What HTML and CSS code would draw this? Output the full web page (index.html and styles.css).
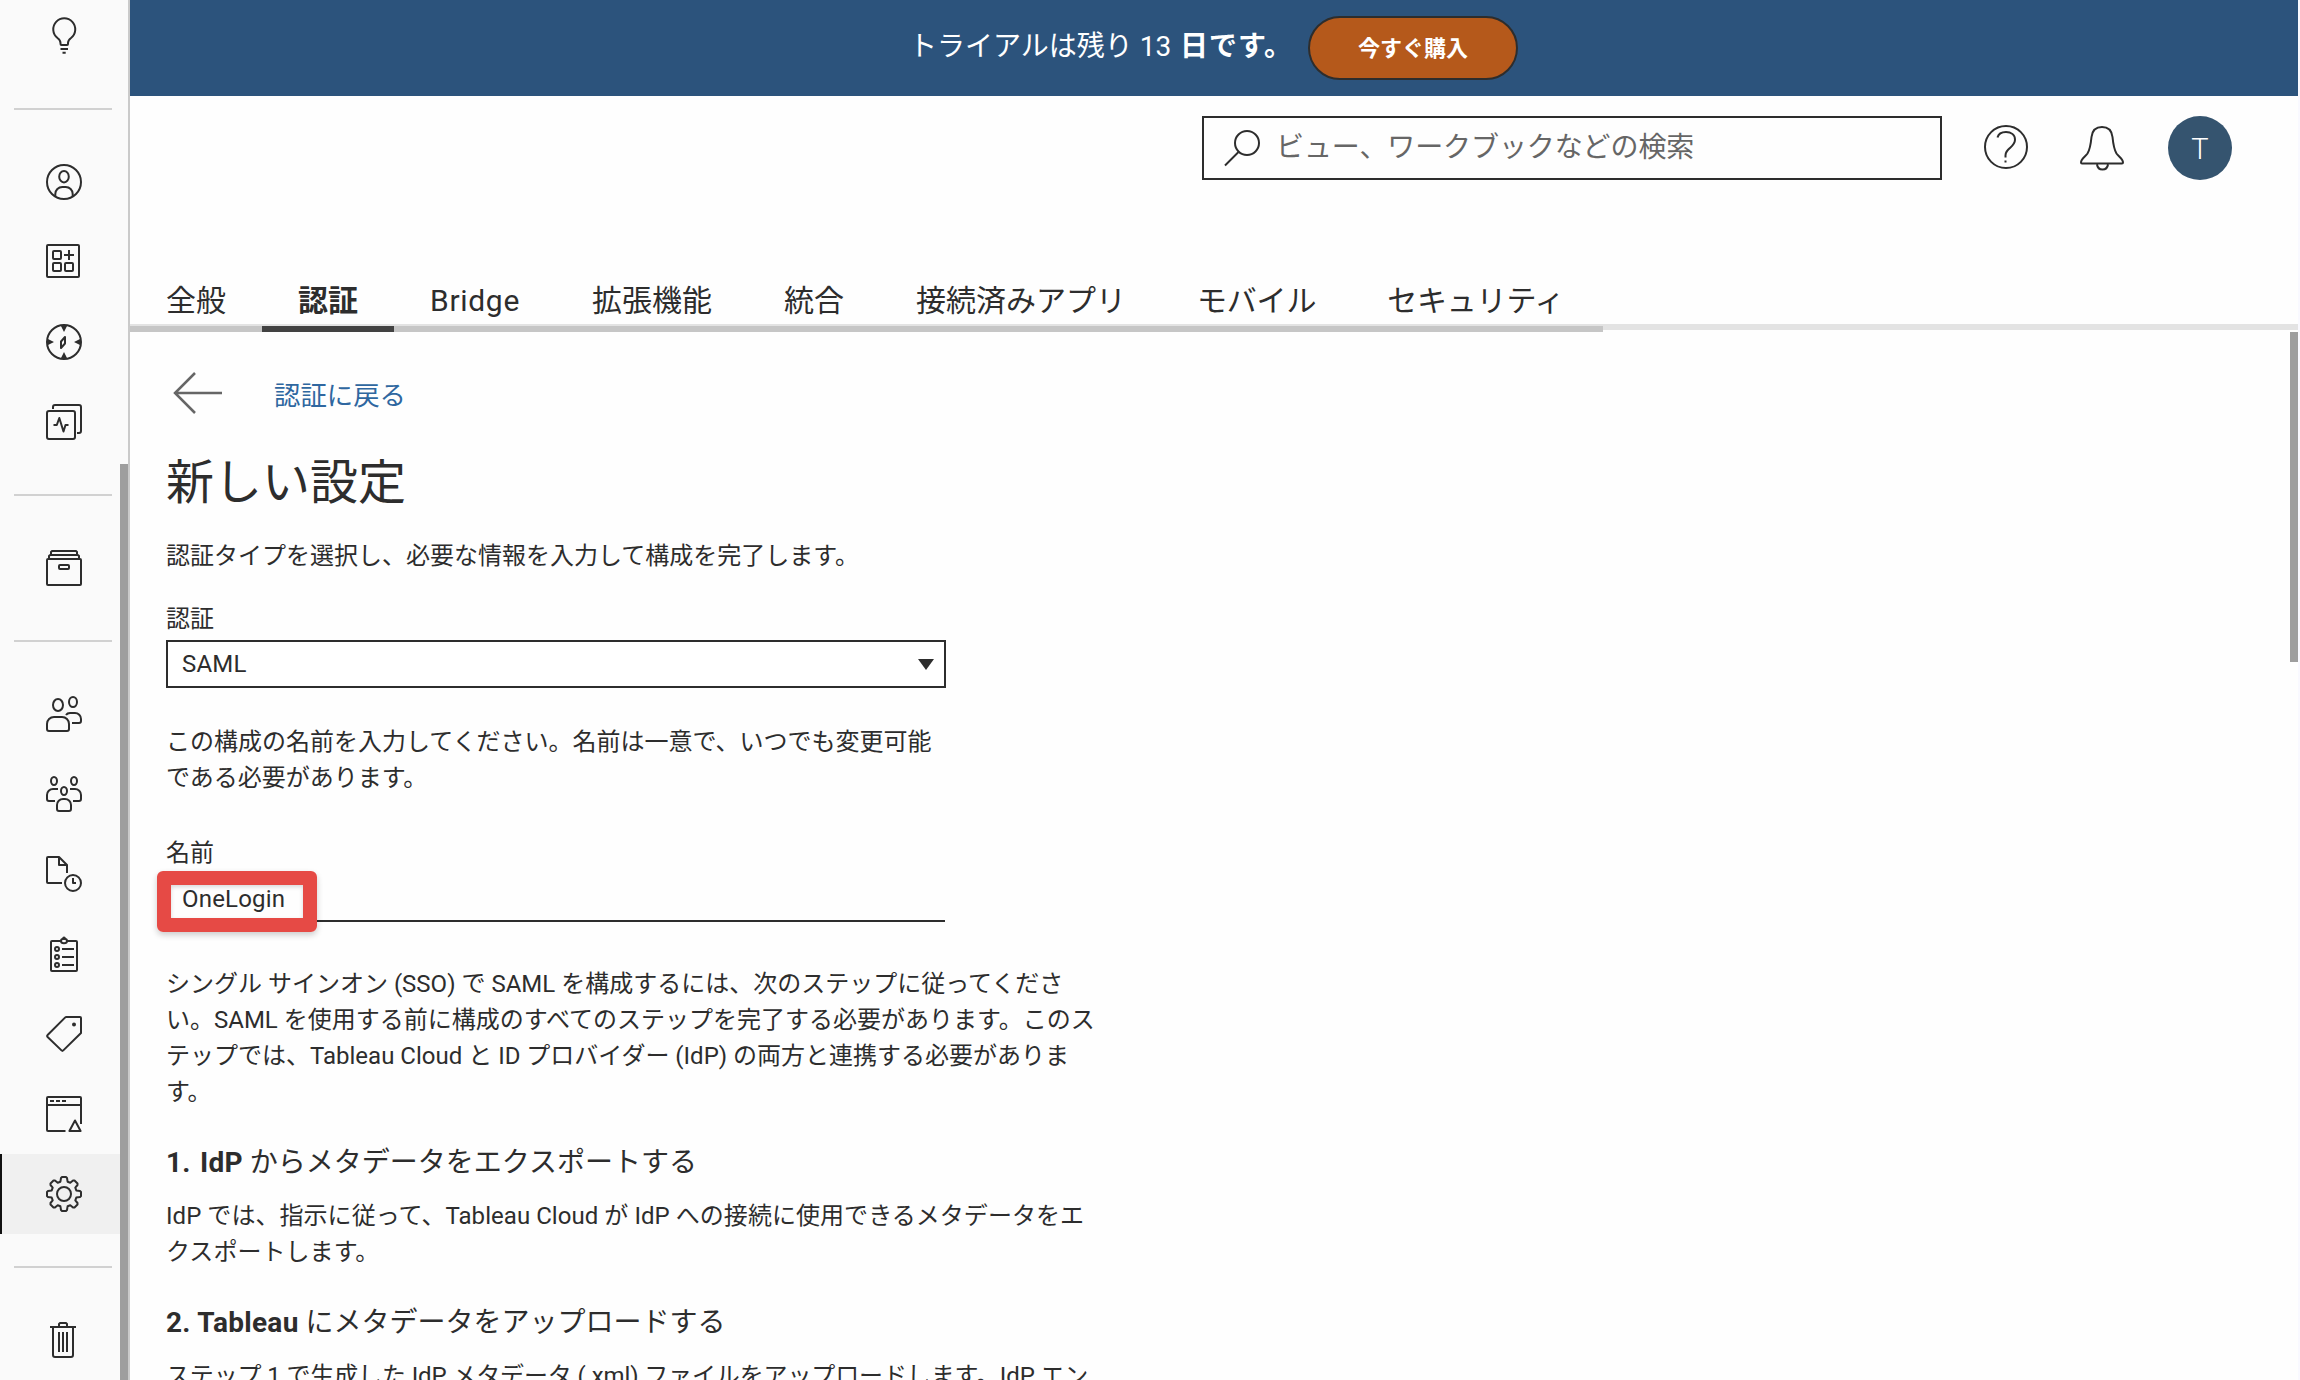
FILE: index.html
```html
<!DOCTYPE html>
<html lang="ja">
<head>
    <meta charset="UTF-8">
    <meta name="viewport" content="width=device-width, initial-scale=1.0">
    <title>新しい設定</title>
    <link rel="stylesheet" href="styles.css">
</head>
<body>
    <nav class="sidebar">
        <a class="nav-item first">
            <svg class="icon" viewBox="0 0 40 40"><path d="M16.5 28V27c0-2.2-1-3.6-3-5A11 11 0 1 1 27 22c-2 1.400-3 2.800-3 5v1a1 1 0 0 1-1 1h-5.500a1 1 0 0 1-1-1zM16.500 33h7.500M18.500 36.800h3.200"/></svg>
        </a>
        <hr>
        <a class="nav-item">
            <svg class="icon" viewBox="0 0 40 40"><circle cx="20" cy="20" r="17"/><ellipse cx="20" cy="14.700" rx="4.800" ry="5.700"/><path d="M11.300 34v-2a7 7 0 0 1 7-7h3.400a7 7 0 0 1 7 7v2"/></svg>
        </a>
        <a class="nav-item">
            <svg class="icon" viewBox="0 0 40 40"><rect x="3" y="3" width="32" height="32" rx="1"/><rect x="9" y="9" width="8" height="8" rx="1"/><rect x="9" y="21" width="8" height="8" rx="1"/><rect x="21" y="21" width="8" height="8" rx="1"/><path d="M25 8v10M20 13h10"/></svg>
        </a>
        <a class="nav-item">
            <svg class="icon" viewBox="0 0 40 40"><circle cx="20" cy="20" r="17"/><path class="fill" d="M16.500 3h7L20 10zM16.500 37h7L20 30zM3 16.500v7L10 20zM37 16.500v7L30 20z"/><path d="M21 15v6.500L17 26v-6.500z"/></svg>
        </a>
        <a class="nav-item">
            <svg class="icon" viewBox="0 0 40 40"><rect x="3" y="9" width="28" height="28" rx="2"/><path d="M9 7V5a2 2 0 0 1 2-2h24a2 2 0 0 1 2 2v24a2 2 0 0 1-2 2h-2M9.500 23h3.300l2.500-7 4.200 13.500 2-6.500h3"/></svg>
        </a>
        <hr>
        <a class="nav-item">
            <svg class="icon" viewBox="0 0 40 40"><rect x="3" y="11" width="34" height="26" rx="1"/><path d="M5 11V8l1-1h28l1 1v3M7 7V4l1-1h24l1 1v3"/><rect x="15" y="17" width="10" height="4" rx="1"/></svg>
        </a>
        <hr>
        <a class="nav-item">
            <svg class="icon" viewBox="0 0 40 40"><ellipse cx="14" cy="11" rx="5" ry="6"/><ellipse cx="29" cy="8" rx="4" ry="5"/><path d="M3 35v-5a7 7 0 0 1 7-7h8a7 7 0 0 1 7 7v5a2 2 0 0 1-2 2H5a2 2 0 0 1-2-2zM22 21c1-1.500 2.500-2 4-2h5a6 6 0 0 1 6 6v2a2 2 0 0 1-2 2h-7"/></svg>
        </a>
        <a class="nav-item">
            <svg class="icon" viewBox="0 0 40 40"><ellipse cx="10" cy="7" rx="3" ry="4"/><ellipse cx="30" cy="7" rx="3" ry="4"/><ellipse cx="20" cy="17" rx="3" ry="4"/><path d="M13 35v-4a6 6 0 0 1 6-6h2a6 6 0 0 1 6 6v4a2 2 0 0 1-2 2H15a2 2 0 0 1-2-2zM14 15H9a6 6 0 0 0-6 6v4a2 2 0 0 0 2 2h6M26 15h5a6 6 0 0 1 6 6v4a2 2 0 0 1-2 2h-6"/></svg>
        </a>
        <a class="nav-item">
            <svg class="icon" viewBox="0 0 40 40"><path d="M18 29H4a1 1 0 0 1-1-1V4a1 1 0 0 1 1-1h11l8 8v8M15 3v8h8M29 24v5h3"/><circle cx="29" cy="29" r="8"/></svg>
        </a>
        <a class="nav-item">
            <svg class="icon" viewBox="0 0 40 40"><path d="M17 7H8a1 1 0 0 0-1 1v28a1 1 0 0 0 1 1h24a1 1 0 0 0 1-1V8a1 1 0 0 0-1-1h-9M18 15h12M18 23h12M18 31h12"/><ellipse cx="20" cy="7" rx="3" ry="2.200"/><circle class="fill" cx="20" cy="4.200" r="1.800"/><circle cx="13" cy="15" r="2"/><circle cx="13" cy="23" r="2"/><circle cx="13" cy="31" r="2"/></svg>
        </a>
        <a class="nav-item">
            <svg class="icon" viewBox="0 0 40 40"><path d="M36 3H22.500a2 2 0 0 0-1.500.600L3.600 21a1.300 1.300 0 0 0 0 2L17.500 36.400a1.300 1.300 0 0 0 1.800 0L37 19V4a1 1 0 0 0-1-1z"/><circle class="fill" cx="30" cy="10.500" r="2"/></svg>
        </a>
        <a class="nav-item">
            <svg class="icon" viewBox="0 0 40 40"><path d="M21.500 37H4a1 1 0 0 1-1-1V4a1 1 0 0 1 1-1h32a1 1 0 0 1 1 1v26M3 11h34M6 7h4M12 7h4M18 7h4M31 26.500L36.600 37H25.400z"/></svg>
        </a>
        <a class="nav-item active">
            <svg class="icon" viewBox="-20 -20 40 40"><circle r="7"/><path d="M-2-17H2L3-16 3.600-12.300 6.300-11.300 9-13.500H10.500L13.500-10.500V-9L11.300-6.300 12.300-3.600 16-3 17-2V2L16 3 12.300 3.600 11.300 6.300 13.500 9V10.500L10.500 13.500H9L6.300 11.300 3.600 12.300 3 16 2 17H-2L-3 16-3.600 12.300-6.300 11.300-9 13.500H-10.500L-13.500 10.500V9L-11.300 6.300-12.300 3.600-16 3-17 2V-2L-16-3-12.300-3.600-11.300-6.300-13.500-9V-10.500L-10.500-13.500H-9L-6.300-11.300-3.600-12.300-3-16z"/></svg>
        </a>
        <hr>
        <a class="nav-item">
            <svg class="icon" viewBox="0 0 40 40"><path d="M6 7h26M15 7V4l1-1h6l1 1v3M9 7v28a2 2 0 0 0 2 2h16a2 2 0 0 0 2-2V7M15 12v20M19 12v20M23 12v20"/></svg>
        </a>
        <div class="sidebar-scroll"></div>
    </nav>

    <div class="main">
        <div class="banner">
            <span>トライアルは残り 13 <b>日です。</b></span>
            <button class="buy">今すぐ購入</button>
        </div>

        <header class="topbar">
            <div class="search">
                <svg class="search-icon" viewBox="0 0 38 38"><circle cx="24" cy="14" r="12"/><path d="M15.500 23L2 36.500"/></svg>
                <span>ビュー、ワークブックなどの検索</span>
            </div>
            <svg class="top-icon" viewBox="0 0 44 46"><circle cx="22" cy="22" r="21"/><path d="M13.500 12.500C14.500 8.500 18 7 22 7c5 0 9 2.800 9 7.800 0 3.700-2.200 5.700-5 8.200-3 2.700-4.500 4-4.500 7.500v2M21.500 35.500v2"/></svg>
            <svg class="top-icon bell" viewBox="0 0 44 46"><path d="M22 2c-6.500 0-9.800 4-10.500 10-.700 7-1.200 12-4 16.500C5 32 1 34 1 37.500q0 1 1 1h40q1 0 1-1c0-3.500-4-5.500-6.500-9-2.800-4.500-3.300-9.500-4-16.500C31.800 6 28.500 2 22 2zM17 39.500c.500 3.500 2.500 5 5.500 5s5-1.500 5.500-5"/></svg>
            <div class="avatar">T</div>
        </header>

        <div class="tabs-row">
            <nav class="tabs">
                <a>全般</a>
                <a class="active">認証</a>
                <a class="latin">Bridge</a>
                <a>拡張機能</a>
                <a>統合</a>
                <a>接続済みアプリ</a>
                <a class="kana">モバイル</a>
                <a class="kana">セキュリティ</a>
            </nav>
        </div>

        <div class="content">
            <a class="back">
                <svg class="arrow" viewBox="0 0 50 44"><path d="M49 22H2M22 2L2 22l20 20"/></svg>
                <span>認証に戻る</span>
            </a>

            <h1>新しい設定</h1>
            <p class="lead">認証タイプを選択し、必要な情報を入力して構成を完了します。</p>

            <label>認証</label>
            <div class="select">
                <span>SAML</span>
                <svg class="caret" viewBox="0 0 16 11"><path d="M0 0h16L8 11z"/></svg>
            </div>

            <p class="hint">この構成の名前を入力してください。名前は一意で、いつでも変更可能<br>である必要があります。</p>

            <label>名前</label>
            <div class="text-field">
                <span>OneLogin</span>
                <div class="highlight"></div>
            </div>

            <p class="steps">シングル サインオン (SSO) で SAML を構成するには、次のステップに従ってくださ<br>い。SAML を使用する前に構成のすべてのステップを完了する必要があります。このス<br>テップでは、Tableau Cloud と ID プロバイダー (IdP) の両方と連携する必要がありま<br>す。</p>

            <h2><b class="num">1.</b><b>IdP</b> からメタデータをエクスポートする</h2>
            <p class="export">IdP では、指示に従って、Tableau Cloud が IdP への接続に使用できるメタデータをエ<br>クスポートします。</p>

            <h2><b>2. Tableau</b> にメタデータをアップロードする</h2>
            <p class="upload">ステップ 1 で生成した IdP メタデータ (.xml) ファイルをアップロードします。IdP エン</p>
            <div class="page-scroll"></div>
        </div>
    </div>
</body>
</html>
```
FILE: styles.css
```css
* {
    box-sizing: border-box;
}
body {
    margin: 0;
    display: flex;
    width: 2300px;
    height: 1380px;
    overflow: hidden;
    background: #f9f9ff;
    color: #2d2d2d;
    font-family: Roboto, "Noto Sans CJK JP", sans-serif;
    font-size: 24px;
    line-height: 36px;
}

/* sidebar */
.sidebar {
    position: relative;
    flex: none;
    width: 130px;
    height: 1380px;
    overflow: hidden;
    background: #fafafa;
    border-right: 2px solid #cacaca;
}
.sidebar hr {
    width: 98px;
    height: 2px;
    margin: 32px 0 32px 14px;
    border: none;
    background: #d1d1d1;
}
.nav-item {
    display: flex;
    align-items: center;
    justify-content: center;
    height: 80px;
}
.nav-item.first {
    margin-top: -4px;
}
.nav-item.active {
    background: #f0f0f0;
    box-shadow: inset 2px 0 0 #111;
}
.icon {
    width: 40px;
    height: 40px;
    fill: none;
    stroke: #2d2d2d;
    stroke-width: 2;
    stroke-linejoin: round;
}
.icon .fill {
    fill: #2d2d2d;
    stroke: none;
}
.sidebar-scroll {
    position: absolute;
    top: 464px;
    right: 0;
    bottom: 0;
    width: 8px;
    background: #9e9e9e;
}

/* header */
.main {
    width: 2168px;
    height: 1380px;
    overflow: hidden;
    background: #fefefe;
}
.banner {
    display: flex;
    align-items: center;
    height: 96px;
    padding-left: 779px;
    background: #2c537c;
    color: #fff;
    font-size: 28px;
}
.banner span {
    width: 399px;
    padding-bottom: 3px;
    white-space: nowrap;
}
.banner b {
    margin-left: 2px;
    letter-spacing: 0.9px;
}
.buy {
    width: 210px;
    height: 64px;
    padding: 0 0 4px;
    border: 2px solid #2d2d2d;
    border-radius: 32px;
    background: #b5591b;
    color: #fff;
    font: bold 22px "Noto Sans CJK JP", sans-serif;
}
.topbar {
    display: flex;
    align-items: center;
    height: 64px;
    margin-top: 20px;
    padding-left: 1072px;
}
.search {
    display: flex;
    align-items: center;
    width: 740px;
    height: 64px;
    margin-right: 42px;
    padding-left: 19px;
    border: 2px solid #2d2d2d;
    color: #666;
    font-size: 28px;
}
.search span {
    padding-left: 15px;
    letter-spacing: -0.1px;
}
.search-icon {
    width: 38px;
    height: 38px;
    fill: none;
    stroke: #2d2d2d;
    stroke-width: 2;
}
.top-icon {
    width: 44px;
    height: 46px;
    fill: none;
    stroke: #2d2d2d;
    stroke-width: 2;
}
.bell {
    margin: 0 44px 0 52px;
}
.avatar {
    width: 64px;
    height: 64px;
    border-radius: 50%;
    background: #35546f;
    color: #fff;
    font-size: 29px;
    font-weight: 300;
    line-height: 66px;
    text-align: center;
}

/* tabs */
.tabs-row {
    height: 150px;
    padding-top: 86px;
    border-bottom: 6px solid #e3e3e3;
}
.tabs {
    display: flex;
    width: 1473px;
    height: 66px;
    border-bottom: 6px solid #c6c6c6;
    font-size: 30px;
    line-height: 70px;
}
.tabs a {
    flex: none;
    height: 66px;
    padding: 0 36px;
}
.tabs .active {
    border-bottom: 6px solid #424242;
    font-weight: bold;
}
.tabs .latin {
    width: 162px;
    letter-spacing: 0.7px;
}
.tabs .kana {
    margin-left: -1px;
    letter-spacing: -0.2px;
}

/* content */
.content {
    position: relative;
    height: 1050px;
    padding: 41px 0 0 36px;
}
.back {
    display: flex;
    height: 45px;
    padding-left: 7px;
    color: #2f67a0;
    font-size: 26.4px;
}
.back span {
    padding: 7px 0 0 51px;
}
.arrow {
    width: 50px;
    height: 44px;
    fill: none;
    stroke: #666;
    stroke-width: 2.5;
}
h1 {
    margin: 37px 0 0;
    font-size: 48px;
    font-weight: 400;
    line-height: 60px;
}
p {
    margin: 0;
    white-space: nowrap;
}
.lead {
    margin: 25px 0 27px;
}
label {
    display: block;
}
.select {
    display: flex;
    align-items: center;
    justify-content: space-between;
    width: 780px;
    height: 48px;
    margin-top: 3px;
    padding: 0 10px 0 14px;
    border: 2px solid #2d2d2d;
    background: #fff;
}
.select span,
.text-field span {
    letter-spacing: 0.2px;
}
.caret {
    width: 16px;
    height: 11px;
    margin-top: 1px;
    fill: #2d2d2d;
}
.hint {
    margin: 36px 0 39px;
}
.text-field {
    position: relative;
    width: 779px;
    height: 51px;
    padding: 10px 16px 0;
    border-bottom: 2px solid #2d2d2d;
}
.highlight {
    position: absolute;
    top: 0;
    left: -9px;
    width: 160px;
    height: 61px;
    border: 14px solid #e64a45;
    border-radius: 6px;
    box-shadow: 0 3px 6px rgba(0, 0, 0, 0.2), inset 0 2px 4px rgba(0, 0, 0, 0.15);
}
.steps {
    margin-top: 44px;
}
h2 {
    margin: 33px 0 15px;
    font-size: 28px;
    font-weight: 400;
    line-height: 40px;
    white-space: nowrap;
}
h2 b {
    letter-spacing: 0.3px;
}
.num {
    display: inline-block;
    width: 34px;
}
.export {
    letter-spacing: 0.05px;
}
.upload {
    letter-spacing: -0.13px;
}
.page-scroll {
    position: absolute;
    top: 2px;
    right: 0;
    width: 8px;
    height: 330px;
    background: #9e9e9e;
}
```
